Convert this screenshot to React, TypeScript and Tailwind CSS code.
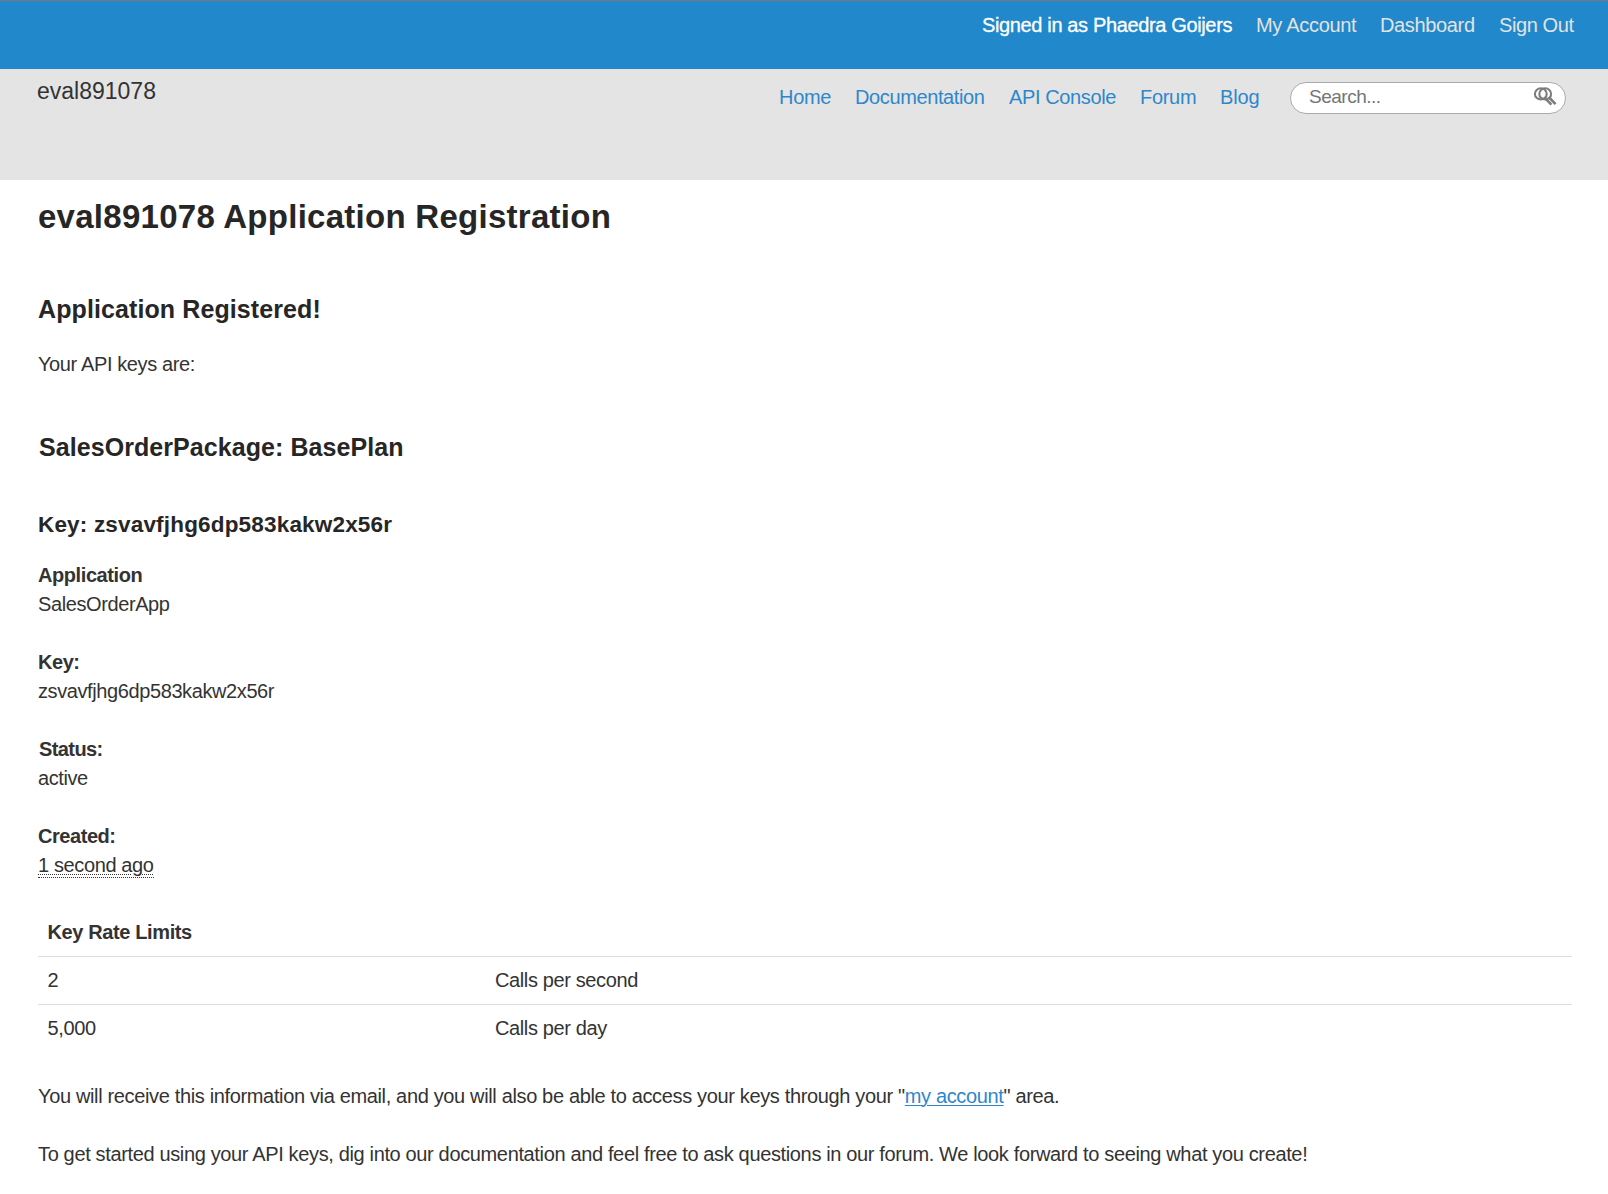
import React from "react";

const accountLinks = [
  { label: "Signed in as Phaedra Goijers", cls: "w-[274px] text-white tracking-[-0.36px] [-webkit-text-stroke:0.3px_white]" },
  { label: "My Account", cls: "w-[124px] text-[#e2e2e2] tracking-[-0.3px]" },
  { label: "Dashboard", cls: "w-[119px] text-[#e2e2e2] tracking-[-0.35px]" },
  { label: "Sign Out", cls: "w-[91px] text-[#e2e2e2] tracking-[-0.4px]" },
];

const navLinks = [
  { label: "Home", cls: "w-[76px] tracking-[-0.3px]" },
  { label: "Documentation", cls: "w-[154px] tracking-[-0.38px]" },
  { label: "API Console", cls: "w-[131px] tracking-[-0.38px]" },
  { label: "Forum", cls: "w-[80px] tracking-[-0.3px]" },
  { label: "Blog", cls: "w-[70px] tracking-[-0.1px]" },
];

const details = [
  { term: "Application", value: "SalesOrderApp", termCls: "tracking-[-0.42px]" },
  { term: "Key:", value: "zsvavfjhg6dp583kakw2x56r", termCls: "tracking-[-0.45px]" },
  { term: "Status:", value: "active", termCls: "pl-px tracking-[-0.6px]" },
];

const limits = [
  { amount: "2", unit: "Calls per second" },
  { amount: "5,000", unit: "Calls per day" },
];

function SearchIcon() {
  return (
    <svg className="h-[20px] w-[24px]" viewBox="0 0 24 20" fill="none" stroke="#7d7d7d">
      <ellipse cx="7.8" cy="6.9" rx="5.9" ry="5.6" strokeWidth="2.1" />
      <ellipse cx="12.2" cy="6.9" rx="5.9" ry="5.6" strokeWidth="2.1" />
      <path d="M12 11.2 18.4 17.6M16.6 11 22.6 17.2" strokeWidth="2.6" />
    </svg>
  );
}

export default function App() {
  return (
    <div className="min-h-[1194px] w-[1608px] overflow-hidden bg-white font-['Liberation_Sans',Arial,sans-serif] text-[20px] leading-[29px] text-[#333]">
      <div className="flex h-[69px] justify-end whitespace-nowrap border-t border-[#777] bg-[#2088cb] pt-[10px]">
        {accountLinks.map((l) => (
          <a key={l.label} className={`h-[29px] shrink-0 ${l.cls}`}>{l.label}</a>
        ))}
        <span className="w-[18px]" />
      </div>

      <header className="flex h-[111px] items-start whitespace-nowrap bg-[#e4e4e4]">
        <div className="w-[779px] pl-[37px] pt-[8px] text-[23px]">eval891078</div>
        <nav className="flex pt-[14px] text-[#2f87cb]">
          {navLinks.map((l) => (
            <a key={l.label} className={`shrink-0 ${l.cls}`}>{l.label}</a>
          ))}
        </nav>
        <div className="mt-[13px] flex h-[32px] w-[276px] items-start justify-between rounded-full border border-[#aaa] bg-white pl-[18px] pr-[8px] text-[19px] leading-[27px] tracking-[-0.5px] text-[#757575]">
          <span>Search...</span>
          <span className="pt-[4px]"><SearchIcon /></span>
        </div>
      </header>

      <main className="pl-[38px] pr-[36px]">
        <h1 className="pt-[17px] text-[33px] font-bold leading-[40px] tracking-[0.27px] text-[#262626]">
          eval891078 Application Registration
        </h1>
        <h2 className="mt-[58px] text-[25px] font-bold leading-[29px] tracking-[0.1px] text-[#262626]">
          Application Registered!
        </h2>
        <p className="mt-[26px] tracking-[-0.38px]">Your API keys are:</p>
        <h2 className="mt-[54px] pl-px text-[25px] font-bold leading-[29px] tracking-[0.07px] text-[#262626]">
          SalesOrderPackage: BasePlan
        </h2>
        <h3 className="mt-[48px] text-[22.5px] font-bold leading-[29px] tracking-[0.18px] text-[#262626]">
          Key: zsvavfjhg6dp583kakw2x56r
        </h3>
        <dl className="mt-[22px]">
          {details.map((d) => (
            <div key={d.term} className="mb-[29px]">
              <dt className={`font-bold ${d.termCls}`}>{d.term}</dt>
              <dd className="tracking-[-0.4px]">{d.value}</dd>
            </div>
          ))}
          <div>
            <dt className="font-bold tracking-[-0.45px]">Created:</dt>
            <dd className="h-[29px] tracking-[-0.38px]">
              <abbr className="inline-block h-[27px] border-b border-dotted border-[#333] underline decoration-dotted decoration-1 underline-offset-[2px]">
                1 second ago
              </abbr>
            </dd>
          </div>
        </dl>

        <table className="mt-[28px] w-[1534px] table-fixed border-collapse tracking-[-0.38px]">
          <colgroup>
            <col className="w-[447px]" />
            <col />
          </colgroup>
          <thead>
            <tr className="h-[48px]">
              <th colSpan={2} className="p-0 pl-[9.5px] pt-[2px] text-left">Key Rate Limits</th>
            </tr>
          </thead>
          <tbody>
            {limits.map((l) => (
              <tr key={l.unit} className="h-[48px] border-t border-[#dedede]">
                <td className="p-0 pl-[9.5px]">{l.amount}</td>
                <td className="p-0 pl-[10px]">{l.unit}</td>
              </tr>
            ))}
          </tbody>
        </table>

        <p className="mt-[30px] whitespace-nowrap tracking-[-0.35px]">
          You will receive this information via email, and you will also be able to access your keys through your "
          <a className="text-[#2f87cb] underline decoration-1 underline-offset-2">my account</a>" area.
        </p>
        <p className="mt-[29px] whitespace-nowrap tracking-[-0.355px]">
          To get started using your API keys, dig into our documentation and feel free to ask questions in our forum. We look forward to seeing what you create!
        </p>
      </main>
    </div>
  );
}
